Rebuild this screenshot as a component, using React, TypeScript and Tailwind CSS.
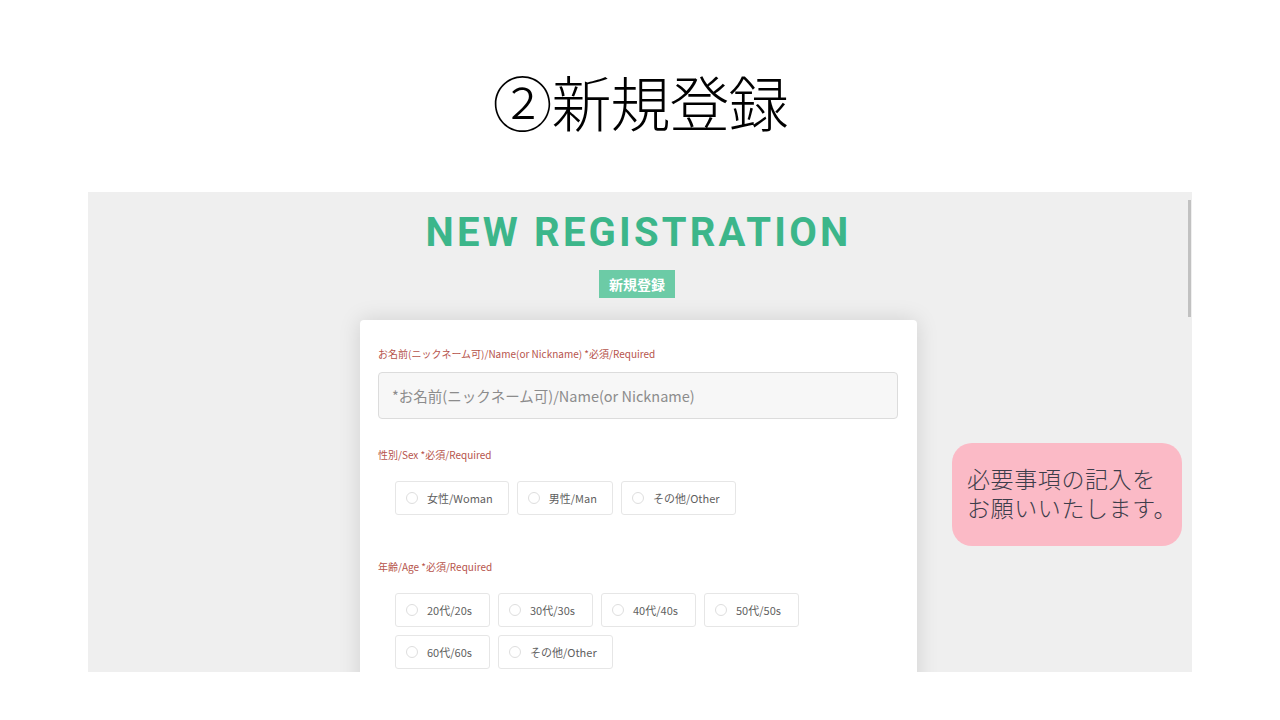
import React from 'react';

const jp = { fontFamily: '"Noto Sans CJK JP", "Noto Sans", sans-serif' };

function Radio({ label, wide }: { label: string; wide?: boolean }) {
  return (
    <label
      className={
        'flex h-[34px] items-center gap-[9px] rounded-[3px] border border-[#e6e6e6] bg-white pl-[10px] pr-[15px] ' +
        (wide ? '' : 'min-w-[95px]')
      }
    >
      <span className="h-[12px] w-[12px] shrink-0 rounded-full border border-[#dedede] bg-white" />
      <span className="text-[11px] leading-none text-[#5f5f5f]">{label}</span>
    </label>
  );
}

function FieldLabel({ children }: { children: React.ReactNode }) {
  return <p className="text-[10px] leading-[12px] text-[#b6534b]">{children}</p>;
}

export default function App() {
  return (
    <div className="flex h-[720px] w-[1280px] flex-col items-center bg-white" style={jp}>
      <h1 className="pt-[71px] text-[60px] font-light leading-none tracking-[-1px] text-black">②新規登録</h1>

      <div className="relative mt-[61px] h-[480px] w-[1104px] overflow-hidden bg-[#efefef]">
        {/* scrollbar */}
        <div className="absolute right-[1px] top-[8px] h-[117px] w-[3px] bg-[#c1c1c1]" />

        <div className="flex w-[1098px] flex-col items-center pt-[21px]">
          <h2
            className="pl-[3px] text-[40px] font-bold leading-none tracking-[3.2px] text-[#3cb68a]"
            style={{ fontFamily: 'Roboto, "Liberation Sans", Arial, sans-serif' }}
          >
            NEW REGISTRATION
          </h2>
          <div className="mt-[17px] flex h-[28px] items-center bg-[#6ccba6] px-[10px] text-[14px] font-bold text-white">
            新規登録
          </div>
        </div>

        <div className="ml-[272px] mt-[22px] w-[557px] rounded-[4px] bg-white pb-[40px] pl-[18px] pr-[19px] pt-[28px] shadow-[0_0_22px_rgba(0,0,0,0.13)]">
          <FieldLabel>お名前(ニックネーム可)/Name(or Nickname) *必須/Required</FieldLabel>
          <input
            className="mt-[12px] block h-[47px] w-[520px] rounded-[4px] border border-[#dcdcdc] bg-[#f7f7f7] px-[13px] text-[14.5px] text-[#333] outline-none placeholder:text-[#8c8c8c]"
            placeholder="*お名前(ニックネーム可)/Name(or Nickname)"
          />

          <div className="mt-[30px]">
            <FieldLabel>性別/Sex *必須/Required</FieldLabel>
          </div>
          <div className="ml-[17px] mt-[20px] flex gap-[8px]">
            <Radio label="女性/Woman" wide />
            <Radio label="男性/Man" wide />
            <Radio label="その他/Other" wide />
          </div>

          <div className="mt-[46px]">
            <FieldLabel>年齢/Age *必須/Required</FieldLabel>
          </div>
          <div className="ml-[17px] mt-[20px] flex w-[420px] flex-wrap gap-[8px]">
            <Radio label="20代/20s" />
            <Radio label="30代/30s" />
            <Radio label="40代/40s" />
            <Radio label="50代/50s" />
            <Radio label="60代/60s" />
            <Radio label="その他/Other" wide />
          </div>
        </div>

        {/* callout */}
        <div className="absolute left-[864px] top-[251px] flex h-[103px] w-[230px] flex-col rounded-[20px] bg-[#fbbac6] pl-[15px] pt-[21px] text-[23px] font-light leading-[29px] tracking-[0.6px] text-[#3d3d4a]">
          <span>必要事項の記入を</span>
          <span>お願いいたします。</span>
        </div>
      </div>
    </div>
  );
}
